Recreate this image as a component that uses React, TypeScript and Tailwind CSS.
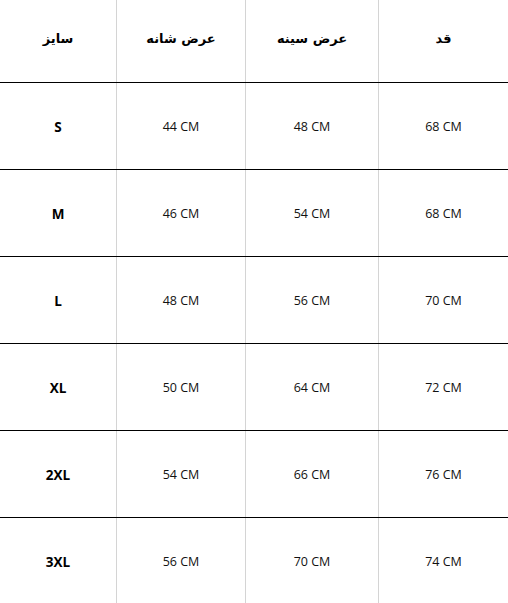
const header = ["سایز", "عرض شانه", "عرض سینه", "قد"]

const rows = [
  ["S", "44 CM", "48 CM", "68 CM"],
  ["M", "46 CM", "54 CM", "68 CM"],
  ["L", "48 CM", "56 CM", "70 CM"],
  ["XL", "50 CM", "64 CM", "72 CM"],
  ["2XL", "54 CM", "66 CM", "76 CM"],
  ["3XL", "56 CM", "70 CM", "74 CM"],
]

const cols = "grid grid-cols-[117px_129px_133px_129px]"

export default function App() {
  return (
    <div className="w-[508px] h-[603px] overflow-hidden bg-white text-black">
      {/* Header */}
      <div className={`${cols} h-[83px] border-b border-black`}>
        {header.map((h, i) => (
          <div
            key={h}
            dir="rtl"
            className={`flex items-center justify-center pb-1 text-[13px] font-bold font-['DejaVu_Sans',sans-serif] ${
              i < 3 ? "border-r border-[#d4d4d4]" : ""
            }`}
          >
            {h}
          </div>
        ))}
      </div>

      {/* Size rows */}
      {rows.map((r, ri) => (
        <div
          key={r[0]}
          className={`${cols} h-[87px] ${ri < rows.length - 1 ? "border-b border-black" : ""}`}
        >
          {r.map((c, i) => (
            <div
              key={i}
              className={`flex items-center justify-center pt-0.5 font-['Open_Sans',sans-serif] ${
                i === 0 ? "text-[13.5px] font-bold" : "text-[12.5px] text-[#111]"
              } ${i < 3 ? "border-r border-[#d4d4d4]" : ""}`}
            >
              {c}
            </div>
          ))}
        </div>
      ))}
    </div>
  )
}
